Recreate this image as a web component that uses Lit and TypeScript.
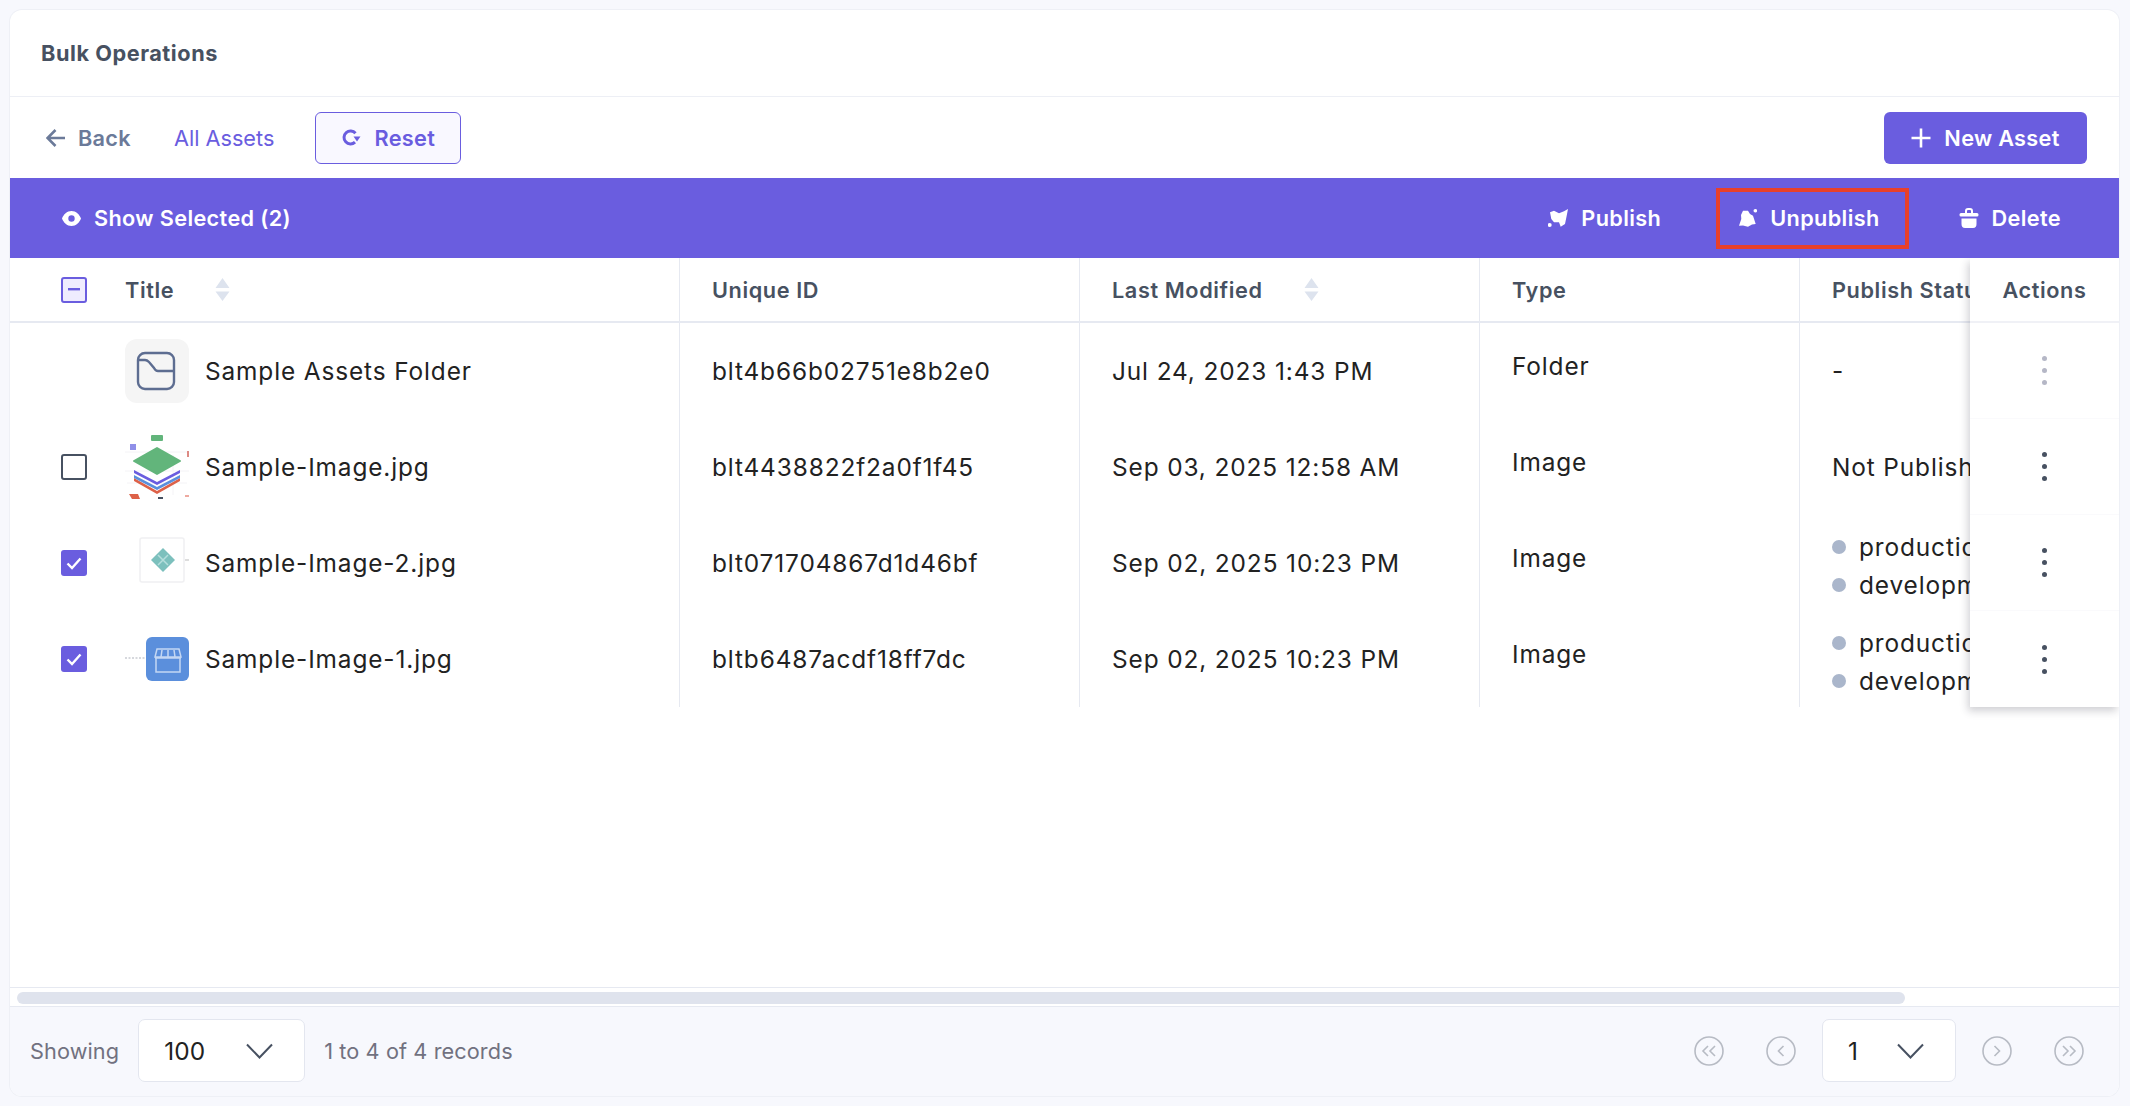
import { LitElement, html, css, svg } from "lit";
import { customElement } from "lit/decorators.js";

type Row = {
  thumb: string;
  title: string;
  uid: string;
  modified: string;
  type: string;
  status: string[];
  check: string;
};

const ROWS: Row[] = [
  { thumb: "folder", title: "Sample Assets Folder", uid: "blt4b66b02751e8b2e0", modified: "Jul 24, 2023 1:43 PM", type: "Folder", status: ["-"], check: "none" },
  { thumb: "stack", title: "Sample-Image.jpg", uid: "blt4438822f2a0f1f45", modified: "Sep 03, 2025 12:58 AM", type: "Image", status: ["Not Published"], check: "off" },
  { thumb: "diamond", title: "Sample-Image-2.jpg", uid: "blt071704867d1d46bf", modified: "Sep 02, 2025 10:23 PM", type: "Image", status: ["production", "development"], check: "on" },
  { thumb: "store", title: "Sample-Image-1.jpg", uid: "bltb6487acdf18ff7dc", modified: "Sep 02, 2025 10:23 PM", type: "Image", status: ["production", "development"], check: "on" },
];

const sortIcon = html`<svg class="sort" width="15" height="23" viewBox="0 0 15 23">
  <path d="M7.5 0L14.5 10H.5zM7.5 23L.5 13.5H14.5z" fill="#dde3ee" />
</svg>`;

const chevron = html`<svg class="chev" width="27" height="16" viewBox="0 0 27 16" fill="none">
  <path d="M1 1.5L13.5 14.5L26 1.5" stroke="#475161" stroke-width="2" />
</svg>`;

const thumbs: Record<string, unknown> = {
  folder: svg`<rect width="64" height="64" rx="12" fill="#f5f5f5" />
    <rect x="13" y="14" width="36" height="36" rx="7" fill="none" stroke="#5d6d91" stroke-width="2.4" />
    <path d="M13 21H20Q22 21 24 23L29 29Q30.500 32 33 32H49" fill="none" stroke="#5d6d91" stroke-width="2.400" />`,
  stack: svg`<path d="M0 17H64M0 36H64M48 20V60M2 48H62" stroke="#f4f3f6" stroke-width="1" />
    <rect x="26" y="0" width="12" height="6" rx="1" fill="#62b57b" />
    <rect x="5" y="9" width="6" height="6" fill="#8f8fe8" />
    <path d="M9 48L32 61L55 48V51L32 64L9 51Z" fill="#dd6148" transform="translate(0 -5)" />
    <path d="M9 43L32 55L55 43V46L32 58L9 46Z" fill="#5a8fdc" transform="translate(0 -3)" />
    <path d="M9 37L32 49L55 37V40L32 52L9 40Z" fill="#6a5ddf" transform="translate(0 -2)" />
    <path d="M9 26L32 13L55 26L32 39Z" fill="#62b57b" stroke="#62b57b" stroke-width="2" stroke-linejoin="round" />
    <path d="M4 59H13L15 64H7Z" fill="#dd6148" />
    <rect x="33" y="62" width="5" height="2" fill="#475161" />
    <rect x="62" y="16" width="2" height="6" fill="#dd8a84" />
    <rect x="60" y="60" width="4" height="2" fill="#eeaaa0" />`,
  diamond: svg`<rect x="15" y="7" width="44" height="44" rx="2" fill="#fff" stroke="#f0f0f2" stroke-width="1.500" />
    <path d="M38 17L50 29L38 41L26 29Z" fill="#7cc0bd" />
    <path d="M33 24L43 34M43 24L33 34" stroke="#b5dedc" stroke-width="1.500" />
    <path d="M60 29H64" stroke="#bbb" stroke-width="1" />`,
  store: svg`<path d="M0 31H20" stroke="#c9ccd2" stroke-width="1.500" stroke-dasharray="2 1.500" />
    <rect x="21" y="10" width="43" height="44" rx="6" fill="#5b8fdc" />
    <path d="M31 31V45H55V31M30 31H56M32 22H54L56 30H30ZM37 23L36 30M43 23V30M49 23L50 30" fill="none" stroke="#c4d7f3" stroke-width="1.500" />`,
};

@customElement("app-root")
export class AppRoot extends LitElement {
  static styles = css`
    :host {
      display: block;
      height: 1106px;
      box-sizing: border-box;
      padding: 10px 11px 10px 10px;
      background: #f7f8fd;
      font-family: Inter, "Liberation Sans", sans-serif;
      color: #222222;
    }
    .card {
      height: 100%;
      display: flex;
      flex-direction: column;
      background: #fff;
      border-radius: 12px;
      overflow: hidden;
      box-shadow: 0 0 0 1px #eef0f6;
    }
    .page-head {
      height: 87px;
      flex: none;
      box-sizing: border-box;
      display: flex;
      align-items: center;
      padding-left: 31px;
      border-bottom: 1px solid #edeff5;
      font-size: 21.7px;
      font-weight: 700;
      color: #475161;
      letter-spacing: 0.55px;
    }
    .toolbar {
      height: 81px;
      flex: none;
      display: flex;
      align-items: center;
      padding: 0 32px 0 36px;
      font-size: 21.7px;
      font-weight: 600;
      letter-spacing: 0.3px;
    }
    .back {
      display: flex;
      align-items: center;
      gap: 12px;
      color: #6b7a99;
    }
    .all {
      margin-left: 43px;
      color: #6a5ddf;
      font-weight: 400;
      letter-spacing: 0;
    }
    .reset {
      margin-left: 41px;
      width: 146px;
      height: 52px;
      box-sizing: border-box;
      display: flex;
      align-items: center;
      justify-content: center;
      gap: 14px;
      background: #f9f8ff;
      border: 1.5px solid #6a5ddf;
      border-radius: 6px;
      color: #6a5ddf;
    }
    .new {
      margin-left: auto;
      width: 203px;
      height: 52px;
      display: flex;
      align-items: center;
      justify-content: center;
      gap: 13px;
      background: #6a5ddf;
      border-radius: 6px;
      color: #fff;
    }
    .bulk {
      height: 80px;
      flex: none;
      display: flex;
      align-items: center;
      gap: 29px;
      padding: 0 29px 0 52px;
      background: #6a5ddf;
      color: #fff;
      font-size: 21.7px;
      font-weight: 600;
      letter-spacing: 0.36px;
    }
    .show {
      display: flex;
      align-items: center;
      gap: 13px;
      margin-right: auto;
    }
    .act {
      display: flex;
      align-items: center;
      gap: 13px;
      height: 61px;
      box-sizing: border-box;
      padding: 0 25px 0 17px;
      border: 4px solid transparent;
    }
    .act.marked {
      margin-left: -3px;
      border-color: #e8402a;
    }
    .table {
      position: relative;
      flex: 1;
      min-height: 0;
      overflow: hidden;
    }
    .row {
      display: grid;
      grid-template-columns: 670px 400px 400px 320px 319px;
      height: 96px;
    }
    .row.head {
      height: 65px;
      box-sizing: border-box;
      border-bottom: 2px solid #e6e9f1;
    }
    .cell {
      display: flex;
      align-items: center;
      box-sizing: border-box;
      padding-left: 32px;
      white-space: nowrap;
      overflow: hidden;
      border-right: 1.5px solid #e6e9f1;
      font-size: 24.4px;
      letter-spacing: 0.88px;
    }
    .row.head .cell {
      font-size: 21.7px;
      font-weight: 600;
      color: #475161;
      letter-spacing: 0.6px;
    }
    .cell:last-child {
      border-right: none;
    }
    .cell.first {
      padding-left: 51px;
    }
    .cell.raised span {
      position: relative;
      top: -5px;
    }
    .sort {
      margin-left: 41px;
    }
    .box {
      width: 26px;
      height: 26px;
      flex: none;
      box-sizing: border-box;
      margin-right: 38px;
      display: flex;
      align-items: center;
      justify-content: center;
      border-radius: 3px;
    }
    .box.off {
      border: 2px solid #475161;
    }
    .box.on {
      background: #6a5ddf;
    }
    .box.mixed {
      border: 2px solid #6a5ddf;
      background: #efecfe;
    }
    .thumb {
      width: 64px;
      height: 64px;
      flex: none;
      margin-right: 16px;
      display: block;
      filter: blur(0.4px);
    }
    .status {
      display: flex;
      flex-direction: column;
      line-height: 38px;
      padding-top: 5px;
    }
    .env {
      display: flex;
      align-items: center;
      gap: 13px;
    }
    .dot {
      width: 14px;
      height: 14px;
      border-radius: 50%;
      background: #aab6cb;
      flex: none;
    }
    .actions {
      position: absolute;
      top: 0;
      right: 0;
      width: 149px;
      height: 449px;
      background: #fff;
      box-shadow: -2px 4px 8px rgba(40, 40, 60, 0.22);
    }
    .actions .hd {
      height: 65px;
      box-sizing: border-box;
      display: flex;
      align-items: center;
      justify-content: center;
      font-size: 21.7px;
      font-weight: 600;
      letter-spacing: 0.6px;
      color: #475161;
      border-bottom: 2px solid #f0f1f6;
    }
    .actions .it {
      height: 96px;
      box-sizing: border-box;
      display: flex;
      flex-direction: column;
      align-items: center;
      justify-content: center;
      gap: 7px;
      border-bottom: 1px solid #fafafc;
    }
    .actions .it:last-child {
      border-bottom: none;
    }
    .actions i {
      width: 5px;
      height: 5px;
      border-radius: 50%;
      background: #475161;
    }
    .actions .it.dim i {
      background: #b5b7c6;
    }
    .track {
      height: 20px;
      flex: none;
      box-sizing: border-box;
      display: flex;
      align-items: center;
      padding: 1.5px 0 0 7px;
      border-top: 1.5px solid #e6e9f1;
      border-bottom: 1.5px solid #e6e9f1;
    }
    .track div {
      width: 1888px;
      height: 12px;
      border-radius: 6px;
      background: #dfe3ed;
    }
    .foot {
      height: 89px;
      flex: none;
      box-sizing: border-box;
      display: flex;
      align-items: center;
      padding: 0 35px 2px 20px;
      background: #f7f8fd;
      font-size: 21.7px;
      letter-spacing: 0.1px;
      color: #717180;
    }
    .sel {
      height: 63px;
      box-sizing: border-box;
      display: flex;
      align-items: center;
      background: #fff;
      border: 1.5px solid #e3e6ef;
      border-radius: 7px;
      font-size: 24.4px;
      color: #222222;
    }
    .sel.size {
      width: 167px;
      margin: 0 19px 0 19px;
      padding-left: 25px;
      justify-content: space-between;
      padding-right: 31px;
    }
    .sel.page {
      width: 134px;
      margin-right: 26px;
      padding: 0 31px 0 25px;
      justify-content: space-between;
    }
    .pager {
      margin-left: auto;
      display: flex;
      align-items: center;
    }
    .round {
      width: 30px;
      height: 30px;
      display: block;
    }
    .gap-a {
      margin-right: 42px;
    }
    .gap-b {
      margin-right: 26px;
    }
  `;

  private box(kind: string) {
    if (kind === "none") return html`<span class="box"></span>`;
    if (kind === "off") return html`<span class="box off"></span>`;
    return html`<span class="box on">
      <svg width="16" height="13" viewBox="0 0 16 13" fill="none">
        <path d="M1.500 6.500L6 11L14.500 1.500" stroke="#fff" stroke-width="2.400" />
      </svg>
    </span>`;
  }

  private round(d: string, gapClass = "") {
    return html`<svg class="round ${gapClass}" viewBox="0 0 30 30" fill="none">
      <circle cx="15" cy="15" r="14" stroke="#b7bbc4" stroke-width="1.600" />
      <path d=${d} stroke="#b7bbc4" stroke-width="1.600" />
    </svg>`;
  }

  private renderRow(r: Row) {
    return html`<div class="row">
      <div class="cell first">
        ${this.box(r.check)}
        <svg class="thumb" viewBox="0 0 64 64">${thumbs[r.thumb]}</svg>
        <span>${r.title}</span>
      </div>
      <div class="cell"><span>${r.uid}</span></div>
      <div class="cell"><span>${r.modified}</span></div>
      <div class="cell raised"><span>${r.type}</span></div>
      <div class="cell">
        ${r.status.length > 1
          ? html`<div class="status">
              ${r.status.map((s) => html`<div class="env"><span class="dot"></span>${s}</div>`)}
            </div>`
          : html`<span>${r.status[0]}</span>`}
      </div>
    </div>`;
  }

  render() {
    return html`<div class="card">
      <div class="page-head">Bulk Operations</div>

      <div class="toolbar">
        <span class="back">
          <svg width="20" height="20" viewBox="0 0 20 20" fill="none">
            <path d="M19 10H2M9.500 2L1.500 10L9.500 18" stroke="#6b7a99" stroke-width="2.600" />
          </svg>
          Back
        </span>
        <span class="all">All Assets</span>
        <span class="reset">
          <svg width="19" height="17" viewBox="0 0 19 17" fill="none">
            <path d="M13.500 4.300A6.500 6.500 0 1 0 13 13.200" stroke="#6a5ddf" stroke-width="3" />
            <path d="M11.500 7.500H18.500L15 12.500Z" fill="#6a5ddf" />
          </svg>
          Reset
        </span>
        <span class="new">
          <svg width="20" height="20" viewBox="0 0 20 20" fill="none">
            <path d="M10 .5V19.500M.5 10H19.500" stroke="#fff" stroke-width="2.600" />
          </svg>
          New Asset
        </span>
      </div>

      <div class="bulk">
        <span class="show">
          <svg width="19" height="15" viewBox="0 0 19 15">
            <path fill="#fff" fill-rule="evenodd"
              d="M9.500 0C14 0 17.500 3.500 19 7.500C17.500 11.500 14 15 9.500 15C5 15 1.500 11.500 0 7.500C1.500 3.500 5 0 9.500 0ZM9.500 4.300A3.200 3.200 0 1 0 9.500 10.700A3.200 3.200 0 1 0 9.500 4.300Z" />
          </svg>
          Show Selected (2)
        </span>
        <span class="act">
          <svg width="20" height="20" viewBox="0 0 20 20" fill="#fff">
            <path d="M20 1L18.700 7.700L17 16L12.700 18.700L11 14.300L6 14.300L3.300 11L2 4.300L6 2.700L11 5.300L16 3.300Z" />
            <circle cx="1.700" cy="17" r="2" />
          </svg>
          Publish
        </span>
        <span class="act marked">
          <svg width="20" height="20" viewBox="0 0 20 20" fill="#fff">
            <path d="M6 2.700L11 2.700L13 6L16 7.700L18.700 16L15 16.500L11 18.700L6 17.500L2 17.700L4.300 11L4 7Z" />
            <circle cx="18.300" cy="2.700" r="1.800" />
          </svg>
          Unpublish
        </span>
        <span class="act">
          <svg width="20" height="20" viewBox="0 0 20 20" fill="#fff">
            <path d="M7 5V3Q7 1 9 1H11Q13 1 13 3V5" fill="none" stroke="#fff" stroke-width="2" />
            <rect x="0.500" y="5" width="19" height="3.500" rx="1.500" />
            <path d="M2.500 10.500H17.500V16Q17.500 20 14 20H6Q2.500 20 2.500 16Z" />
          </svg>
          Delete
        </span>
      </div>

      <div class="table">
        <div class="row head">
          <div class="cell first">
            <span class="box mixed">
              <svg width="12" height="3" viewBox="0 0 12 3"><rect width="12" height="2.400" fill="#6a5ddf" /></svg>
            </span>
            <span>Title</span>${sortIcon}
          </div>
          <div class="cell"><span>Unique ID</span></div>
          <div class="cell"><span>Last Modified</span>${sortIcon}</div>
          <div class="cell"><span>Type</span></div>
          <div class="cell"><span>Publish Status</span></div>
        </div>
        ${ROWS.map((r) => this.renderRow(r))}

        <div class="actions">
          <div class="hd">Actions</div>
          ${ROWS.map(
            (_, i) => html`<div class="it ${i === 0 ? "dim" : ""}"><i></i><i></i><i></i></div>`
          )}
        </div>
      </div>

      <div class="track"><div></div></div>

      <div class="foot">
        Showing
        <span class="sel size">100 ${chevron}</span>
        1 to 4 of 4 records
        <div class="pager">
          ${this.round("M14 10L9 15L14 20M21 10L16 15L21 20", "gap-a")}
          ${this.round("M17.500 10L12.500 15L17.500 20", "gap-b")}
          <span class="sel page">1 ${chevron}</span>
          ${this.round("M12.500 10L17.500 15L12.500 20", "gap-a")}
          ${this.round("M9 10L14 15L9 20M16 10L21 15L16 20")}
        </div>
      </div>
    </div>`;
  }
}
